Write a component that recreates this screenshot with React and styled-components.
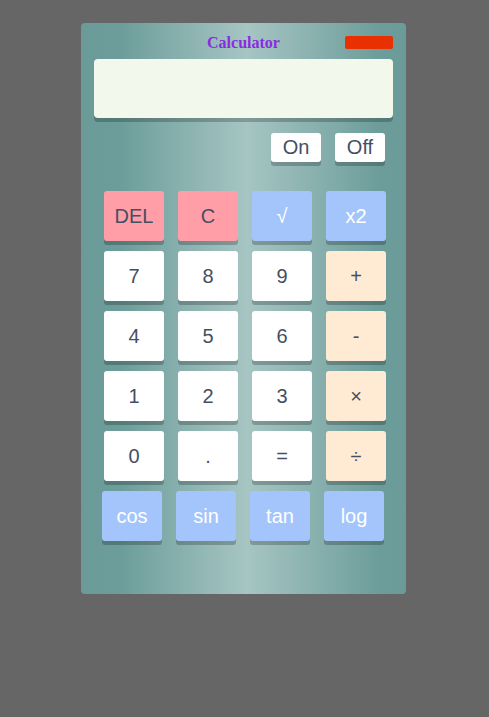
import React from "react";
import styled, { createGlobalStyle } from "styled-components";

const Global = createGlobalStyle`
  html, body { margin: 0; padding: 0; background: #666666; }
  body { font-family: "Liberation Sans", Arial, sans-serif; }
`;

const Page = styled.div`
  display: flex;
  justify-content: center;
  padding-top: 23px;
  padding-right: 2px;
  min-height: 717px;
  box-sizing: border-box;
`;

const Card = styled.div`
  width: 325px;
  height: 571px;
  box-sizing: border-box;
  padding: 13px 13px;
  border-radius: 4px;
  background: linear-gradient(
    to right,
    #6a9b98 0%,
    #6c9d9a 12%,
    #a6c5c3 51%,
    #6c9d9a 92%,
    #6a9b98 100%
  );
  display: flex;
  flex-direction: column;
`;

const Header = styled.div`
  display: grid;
  grid-template-columns: 1fr auto 1fr;
  align-items: center;
  height: 13px;
`;

const Title = styled.h1`
  grid-column: 2;
  margin: 0;
  font-family: "Liberation Serif", "Times New Roman", serif;
  font-weight: bold;
  font-size: 16px;
  line-height: 13px;
  color: #8a2be2;
`;

const Indicator = styled.div`
  grid-column: 3;
  justify-self: end;
  width: 48px;
  height: 13px;
  border-radius: 2px;
  background: #e83000;
`;

const Display = styled.div`
  margin-top: 10px;
  height: 59px;
  border-radius: 4px;
  background: #f2f9ec;
  box-shadow: 0 4px 0 rgba(0, 0, 0, 0.22);
`;

const PowerRow = styled.div`
  display: flex;
  justify-content: flex-end;
  gap: 14px;
  margin-top: 15px;
  padding-right: 8px;
`;

const PowerButton = styled.button`
  width: 50px;
  height: 29px;
  border: none;
  border-radius: 3px;
  background: #ffffff;
  color: #454f63;
  font-family: "Liberation Sans", Arial, sans-serif;
  font-size: 20px;
  padding: 0;
  box-shadow: 0 4px 0 rgba(0, 0, 0, 0.22);
`;

const Keypad = styled.div`
  display: grid;
  grid-template-columns: repeat(4, 60px);
  column-gap: 14px;
  row-gap: 10px;
  margin-top: 29px;
  padding-left: ${(p) => p.$offset}px;
`;

const FnRow = styled(Keypad)`
  margin-top: 10px;
`;

const palette = {
  red: { bg: "#ff9ea6", fg: "#454f63" },
  blue: { bg: "#a3c5fb", fg: "#ffffff" },
  white: { bg: "#ffffff", fg: "#454f63" },
  cream: { bg: "#ffebd4", fg: "#454f63" },
};

const Key = styled.button`
  width: 60px;
  height: 50px;
  border: none;
  border-radius: 3px;
  padding: 0;
  background: ${(p) => palette[p.$kind].bg};
  color: ${(p) => palette[p.$kind].fg};
  font-family: "Liberation Sans", Arial, sans-serif;
  font-size: 20px;
  box-shadow: 0 4px 0 rgba(0, 0, 0, 0.22);
`;

const keys = [
  ["DEL", "red"], ["C", "red"], ["√", "blue"], ["x2", "blue"],
  ["7", "white"], ["8", "white"], ["9", "white"], ["+", "cream"],
  ["4", "white"], ["5", "white"], ["6", "white"], ["-", "cream"],
  ["1", "white"], ["2", "white"], ["3", "white"], ["×", "cream"],
  ["0", "white"], [".", "white"], ["=", "white"], ["÷", "cream"],
];

const fns = ["cos", "sin", "tan", "log"];

export default function App() {
  return (
    <>
      <Global />
      <Page>
        <Card>
          <Header>
            <Title>Calculator</Title>
            <Indicator />
          </Header>
          <Display />
          <PowerRow>
            <PowerButton>On</PowerButton>
            <PowerButton>Off</PowerButton>
          </PowerRow>
          <Keypad $offset={10}>
            {keys.map(([label, kind]) => (
              <Key key={label} $kind={kind}>{label}</Key>
            ))}
          </Keypad>
          <FnRow $offset={8}>
            {fns.map((f) => (
              <Key key={f} $kind="blue">{f}</Key>
            ))}
          </FnRow>
        </Card>
      </Page>
    </>
  );
}
